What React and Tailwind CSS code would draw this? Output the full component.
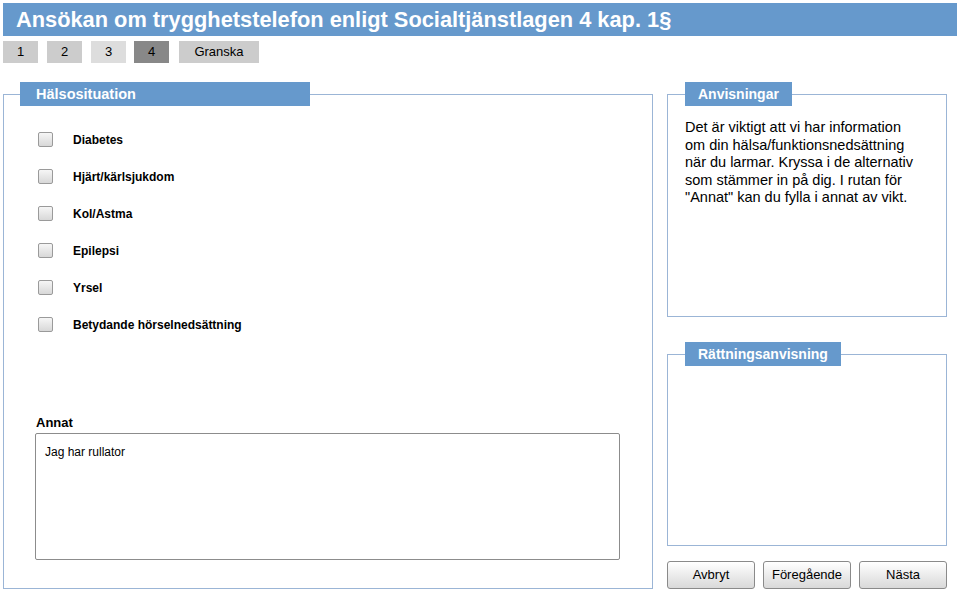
const conditions = [
  'Diabetes',
  'Hjärt/kärlsjukdom',
  'Kol/Astma',
  'Epilepsi',
  'Yrsel',
  'Betydande hörselnedsättning',
];

const tabs = [
  { label: '1', cls: 'w-[35px] bg-[#cccccc]' },
  { label: '2', cls: 'w-[35px] ml-[9px] bg-[#cccccc]' },
  { label: '3', cls: 'w-[35px] ml-[9px] bg-[#dddddd]' },
  { label: '4', cls: 'w-[35px] ml-[8px] bg-[#888888]' },
  { label: 'Granska', cls: 'w-[80px] ml-[10px] bg-[#cccccc]' },
];

const Legend = ({ children, className = '' }) => (
  <legend
    className={`h-[24px] bg-[#6699cc] text-white font-bold leading-[24px] ${className}`}
  >
    {children}
  </legend>
);

const Checkbox = () => (
  <span className="block w-[15px] h-[15px] rounded-[2px] border border-[#9a9a9a] bg-gradient-to-b from-[#f6f6f6] to-[#d8d8d8]" />
);

const Button = ({ children }) => (
  <button className="w-[88px] h-[28px] rounded-[3px] border border-[#8a8a8a] bg-gradient-to-b from-white to-[#d9d9d9] text-[13px] text-black">
    {children}
  </button>
);

export default function App() {
  return (
    <div
      className="w-[960px] h-[592px] bg-white px-[3px] pt-[3px] overflow-hidden text-black"
      style={{ fontFamily: '"Liberation Sans", Arial, sans-serif' }}
    >
      {/* Title bar */}
      <div className="h-[33px] w-[954px] bg-[#6699cc] pl-[13px] flex items-center">
        <h1 className="text-[21.8px] font-bold text-white leading-none">
          Ansökan om trygghetstelefon enligt Socialtjänstlagen 4 kap. 1§
        </h1>
      </div>

      {/* Step tabs */}
      <div className="flex mt-[5px] h-[22px]">
        {tabs.map((t) => (
          <div
            key={t.label}
            className={`${t.cls} flex items-center justify-center text-[13px]`}
          >
            {t.label}
          </div>
        ))}
      </div>

      <div className="flex mt-[19px]">
        {/* Left panel */}
        <fieldset className="w-[649px] h-[507px] border border-[#9bb5d6] px-[32px]">
          <Legend className="w-[290px] -ml-[16px] pl-[16px] text-[14.5px]">Hälsosituation</Legend>
          <div className="flex flex-col gap-[22px] pt-[26px] pl-[2px]">
            {conditions.map((c) => (
              <label key={c} className="flex items-center h-[15px] gap-[20px]">
                <Checkbox />
                <span className="text-[12px] font-bold leading-none mt-[1px]">{c}</span>
              </label>
            ))}
          </div>
          <div className="mt-[83px] text-[13px] font-bold leading-[15px]">Annat</div>
          <textarea
            readOnly
            defaultValue="Jag har rullator"
            className="mt-[3px] -ml-[1px] w-[585px] h-[127px] resize-none rounded-[2px] border border-[#8c8c8c] px-[9px] pt-[11px] text-[12px] leading-[14px] outline-none"
            style={{ fontFamily: '"Liberation Sans", Arial, sans-serif' }}
          />
        </fieldset>

        {/* Right column */}
        <div className="ml-[14px] w-[280px] flex flex-col">
          <fieldset className="h-[235px] border border-[#9bb5d6] px-[17px]">
            <Legend className="px-[13px] text-[14px]">Anvisningar</Legend>
            <p className="mt-[13px] text-[14.5px] leading-[17.5px] whitespace-nowrap">
              Det är viktigt att vi har information
              <br />
              om din hälsa/funktionsnedsättning
              <br />
              när du larmar. Kryssa i de alternativ
              <br />
              som stämmer in på dig. I rutan för
              <br />
              "Annat" kan du fylla i annat av vikt.
            </p>
          </fieldset>

          <fieldset className="mt-[25px] h-[204px] border border-[#9bb5d6] px-[17px]">
            <Legend className="px-[13px] text-[14px]">Rättningsanvisning</Legend>
          </fieldset>

          <div className="mt-[15px] flex justify-between">
            <Button>Avbryt</Button>
            <Button>Föregående</Button>
            <Button>Nästa</Button>
          </div>
        </div>
      </div>
    </div>
  );
}
